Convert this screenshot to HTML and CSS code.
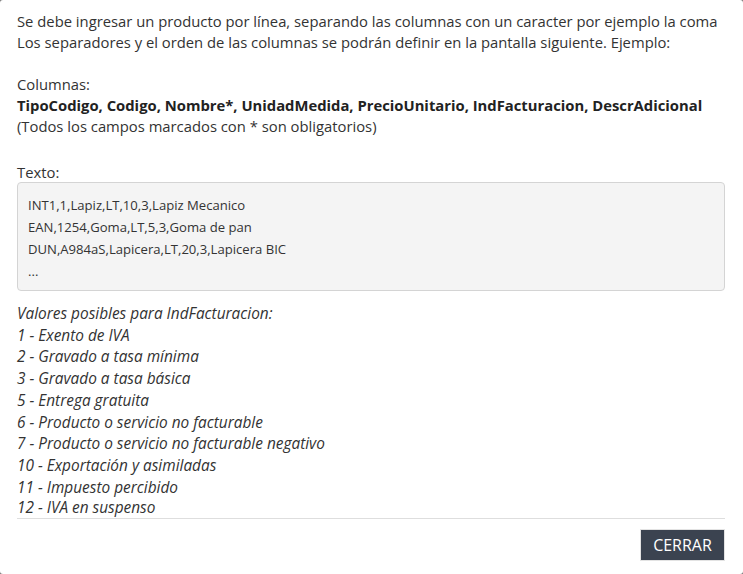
FILE: index.html
```html
<!DOCTYPE html>
<html lang="es">
<head>
<meta charset="utf-8">
<title>Importar productos</title>
<link rel="stylesheet" href="styles.css">
</head>
<body>
<div class="modal">
  <div class="modal-body">
    <p class="intro">Se debe ingresar un producto por línea, separando las columnas con un caracter por ejemplo la coma<br>Los separadores y el orden de las columnas se podrán definir en la pantalla siguiente. Ejemplo:</p>
    <div class="columns">
      <div>Columnas:</div>
      <div class="cols-list">TipoCodigo, Codigo, Nombre*, UnidadMedida, PrecioUnitario, IndFacturacion, DescrAdicional</div>
      <div>(Todos los campos marcados con * son obligatorios)</div>
    </div>
    <div class="label">Texto:</div>
    <div class="example">
      <div>INT1,1,Lapiz,LT,10,3,Lapiz Mecanico</div>
      <div>EAN,1254,Goma,LT,5,3,Goma de pan</div>
      <div>DUN,A984aS,Lapicera,LT,20,3,Lapicera BIC</div>
      <div>...</div>
    </div>
    <ul class="values">
      <li>Valores posibles para IndFacturacion:</li>
      <li>1 - Exento de IVA</li>
      <li>2 - Gravado a tasa mínima</li>
      <li>3 - Gravado a tasa básica</li>
      <li>5 - Entrega gratuita</li>
      <li>6 - Producto o servicio no facturable</li>
      <li>7 - Producto o servicio no facturable negativo</li>
      <li>10 - Exportación y asimiladas</li>
      <li>11 - Impuesto percibido</li>
      <li class="last">12 - IVA en suspenso</li>
    </ul>
  </div>
  <div class="modal-footer">
    <button class="btn-close" type="button">CERRAR</button>
  </div>
</div>
</body>
</html>
```

FILE: styles.css
```css
html, body {
  margin: 0;
  padding: 0;
  background: #7a7a7a;
}
body {
  font-family: "Open Sans", "Noto Sans", sans-serif;
  color: #333;
}
.modal {
  box-sizing: border-box;
  width: 743px;
  height: 574px;
  background: #fff;
  border-radius: 3px;
  display: flex;
  flex-direction: column;
  overflow: hidden;
}
.modal-body {
  padding: 11px 18px 0 17px;
  font-size: 14.8px;
  line-height: 21px;
}
.intro {
  margin: 0 0 21px 0;
  white-space: nowrap;
}
.columns {
  margin-bottom: 25px;
}
.cols-list {
  font-weight: bold;
  color: #222;
  white-space: nowrap;
}
.label {
  margin-bottom: -1px;
}
.example {
  background: #f4f4f4;
  border: 1px solid #d4d4d4;
  border-radius: 4px;
  padding: 11px 10px 8px 10px;
  font-size: 13.1px;
  line-height: 22px;
}
.values {
  list-style: none;
  margin: 12px 0 0 0;
  padding: 0;
  font-style: italic;
  font-size: 15.4px;
  line-height: 21.7px;
  border-bottom: 1px solid #dedede;
}
.values .last {
  line-height: 19.7px;
}
.modal-footer {
  display: flex;
  justify-content: flex-end;
  padding: 10px 18px 0 17px;
}
.btn-close {
  background: #3b4350;
  color: #fff;
  border: 1px solid #e3e3e3;
  font-family: "Open Sans", "Noto Sans", sans-serif;
  font-size: 16px;
  height: 32px;
  width: 85px;
  padding: 0;
  border-radius: 0;
}
```
